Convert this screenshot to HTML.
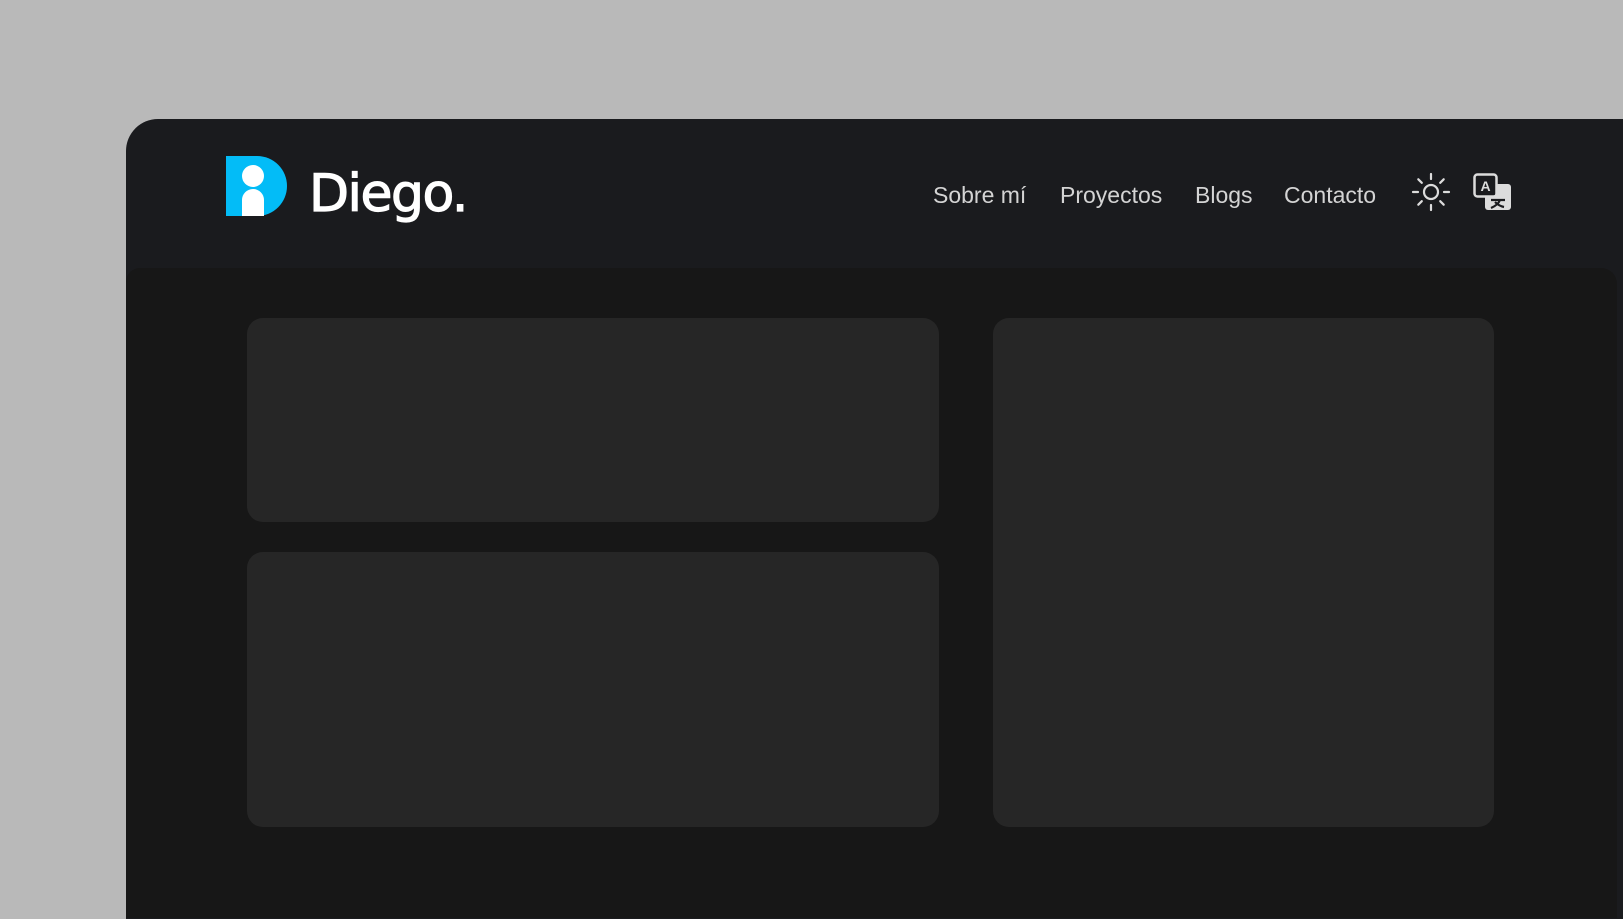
<!DOCTYPE html>
<html><head><meta charset="utf-8"><style>
html,body{margin:0;padding:0;width:1623px;height:905px;overflow:hidden;background:#b9b9b9;font-family:"Liberation Sans",sans-serif}
.win{position:absolute;left:126px;top:119px;width:1520px;height:800px;background:#1a1b1e;border-radius:32px 0 0 0}
.panel{position:absolute;left:126px;top:268px;width:1491px;height:650px;background:#171717;border-radius:14px 16px 0 0}
.card{position:absolute;background:#262626;border-radius:16px}
.nav a{position:absolute;top:180px;font-size:23px;color:#d4d4d4;text-decoration:none;line-height:30px}
.logo{position:absolute;left:226px;top:156px}
</style></head><body>
<div class="win"></div>
<svg class="logo" width="62" height="61" viewBox="0 0 62 61">
<path d="M0 0H31A30 30 0 0 1 31 60H0Z" fill="#03bcf7"/>
<circle cx="27" cy="20" r="11" fill="#fff"/>
<path d="M16 60V44a11 11 0 0 1 22 0V60Z" fill="#fff"/>
</svg>
<svg style="position:absolute;left:300px;top:160px" width="200" height="70">
<text x="9" y="51" font-family="DejaVu Sans, sans-serif" font-size="52" letter-spacing="-1.5" fill="#fff" stroke="#fff" stroke-width="1.2">Diego.</text>
</svg>
<div class="nav">
<a style="left:933px">Sobre mí</a>
<a style="left:1060px">Proyectos</a>
<a style="left:1195px">Blogs</a>
<a style="left:1284px">Contacto</a>
</div>
<svg style="position:absolute;left:1411px;top:172px" width="40" height="40" viewBox="0 0 40 40" fill="none" stroke="#dcdcdc" stroke-width="2.2" stroke-linecap="round">
<circle cx="20" cy="20" r="7"/>
<path d="M20 2v5M20 33v5M2 20h5M33 20h5M7.3 7.3l3.5 3.5M29.2 29.2l3.5 3.5M7.3 32.7l3.5-3.5M29.2 10.8l3.5-3.5"/>
</svg>
<svg style="position:absolute;left:1473px;top:173px" width="40" height="40" viewBox="0 0 40 40">
<rect x="12" y="11" width="26" height="26" rx="3" fill="#dcdcdc"/>
<rect x="1.5" y="1.5" width="22" height="22" rx="3" fill="#1a1b1e" stroke="#dcdcdc" stroke-width="2.5"/>
<text x="12.5" y="18" font-size="14" font-weight="bold" fill="#dcdcdc" text-anchor="middle" font-family="Liberation Sans, sans-serif">A</text>
<path d="M18 27h14M27 27q-2 5-9 8M22 29q4 4 9 5" stroke="#1a1b1e" stroke-width="2.2" fill="none"/>
</svg>
<div class="panel"></div>
<div class="card" style="left:247px;top:318px;width:692px;height:204px"></div>
<div class="card" style="left:247px;top:552px;width:692px;height:275px"></div>
<div class="card" style="left:993px;top:318px;width:501px;height:509px"></div>
</body></html>
